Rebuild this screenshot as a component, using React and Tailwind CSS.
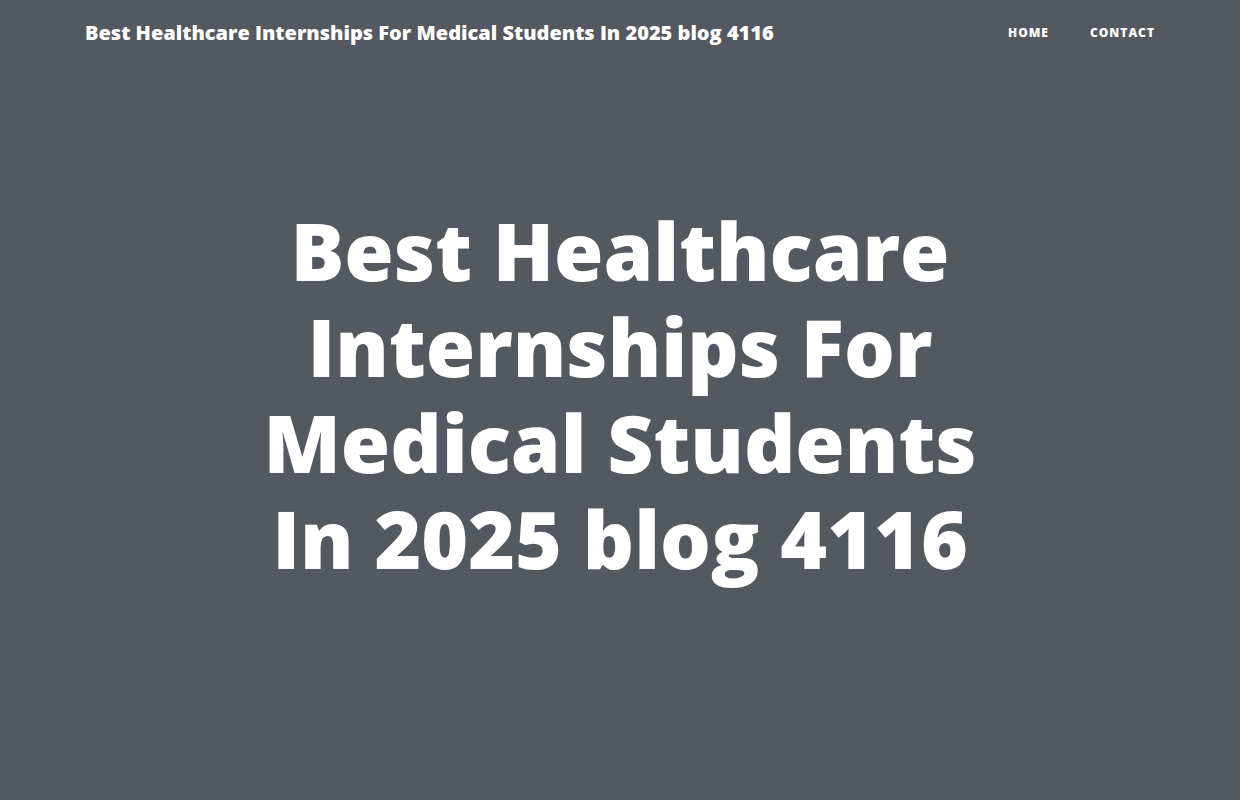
export default function App() {
  return (
    <div
      className="min-h-screen bg-[#545861] text-white"
      style={{ fontFamily: '"Open Sans", "Liberation Sans", sans-serif' }}
    >
      {/* Top bar */}
      <header className="flex items-center justify-between h-[66px] pl-[85px] pr-[85px]">
        <a href="#" className="text-[20px] font-extrabold leading-none">
          Best Healthcare Internships For Medical Students In 2025 blog 4116
        </a>
        <nav className="flex items-center gap-[41px] text-[12px] font-extrabold uppercase tracking-[1px]">
          <a href="#">Home</a>
          <a href="#">Contact</a>
        </nav>
      </header>

      {/* Hero */}
      <section className="flex justify-center pt-[136px] pb-[200px]">
        <h1 className="w-[760px] text-center text-[80px] font-extrabold leading-[96px]">
          Best Healthcare Internships For Medical Students In 2025 blog 4116
        </h1>
      </section>
    </div>
  );
}
